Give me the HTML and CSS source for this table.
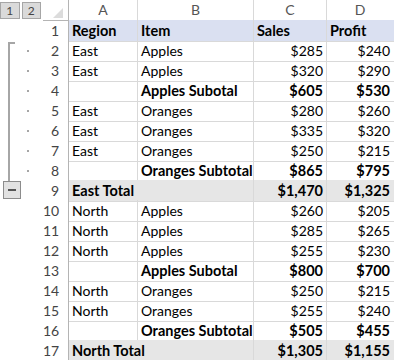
FILE: index.html
```html
<!DOCTYPE html>
<html>

<head>
    <title>Subtotals by Region</title>
    <link rel="stylesheet" href="styles.css">
</head>

<body>
    <div class="sheet">
        <div class="row col_head">
            <div class="gutter levels">
                <span class="lvl_btn">1</span><span class="lvl_btn">2</span>
            </div>
            <div class="rownum corner">
                <svg width="10" height="10" viewBox="0 0 10 10"><polygon points="10,0 10,10 0,10" fill="#dcdcdc" /></svg>
            </div>
            <div class="cell letter">A</div>
            <div class="cell letter">B</div>
            <div class="cell letter">C</div>
            <div class="cell letter">D</div>
        </div>

        <div class="row title">
            <div class="gutter"></div>
            <div class="rownum">1</div>
            <div class="cell">Region</div>
            <div class="cell">Item</div>
            <div class="cell">Sales</div>
            <div class="cell">Profit</div>
        </div>

        <div class="row">
            <div class="gutter grp first"><span class="dot"></span></div>
            <div class="rownum">2</div>
            <div class="cell">East</div>
            <div class="cell">Apples</div>
            <div class="cell num">$285</div>
            <div class="cell num">$240</div>
        </div>
        <div class="row">
            <div class="gutter grp"><span class="dot"></span></div>
            <div class="rownum">3</div>
            <div class="cell">East</div>
            <div class="cell">Apples</div>
            <div class="cell num">$320</div>
            <div class="cell num">$290</div>
        </div>
        <div class="row sub">
            <div class="gutter grp"><span class="dot"></span></div>
            <div class="rownum">4</div>
            <div class="cell"></div>
            <div class="cell">Apples Subotal</div>
            <div class="cell num">$605</div>
            <div class="cell num">$530</div>
        </div>
        <div class="row">
            <div class="gutter grp"><span class="dot"></span></div>
            <div class="rownum">5</div>
            <div class="cell">East</div>
            <div class="cell">Oranges</div>
            <div class="cell num">$280</div>
            <div class="cell num">$260</div>
        </div>
        <div class="row">
            <div class="gutter grp"><span class="dot"></span></div>
            <div class="rownum">6</div>
            <div class="cell">East</div>
            <div class="cell">Oranges</div>
            <div class="cell num">$335</div>
            <div class="cell num">$320</div>
        </div>
        <div class="row">
            <div class="gutter grp"><span class="dot"></span></div>
            <div class="rownum">7</div>
            <div class="cell">East</div>
            <div class="cell">Oranges</div>
            <div class="cell num">$250</div>
            <div class="cell num">$215</div>
        </div>
        <div class="row sub">
            <div class="gutter grp"><span class="dot"></span></div>
            <div class="rownum">8</div>
            <div class="cell"></div>
            <div class="cell">Oranges Subtotal</div>
            <div class="cell num">$865</div>
            <div class="cell num">$795</div>
        </div>
        <div class="row total">
            <div class="gutter"><span class="collapse"></span></div>
            <div class="rownum">9</div>
            <div class="cell wide">East Total</div>
            <div class="cell num">$1,470</div>
            <div class="cell num">$1,325</div>
        </div>

        <div class="row">
            <div class="gutter"></div>
            <div class="rownum">10</div>
            <div class="cell">North</div>
            <div class="cell">Apples</div>
            <div class="cell num">$260</div>
            <div class="cell num">$205</div>
        </div>
        <div class="row">
            <div class="gutter"></div>
            <div class="rownum">11</div>
            <div class="cell">North</div>
            <div class="cell">Apples</div>
            <div class="cell num">$285</div>
            <div class="cell num">$265</div>
        </div>
        <div class="row">
            <div class="gutter"></div>
            <div class="rownum">12</div>
            <div class="cell">North</div>
            <div class="cell">Apples</div>
            <div class="cell num">$255</div>
            <div class="cell num">$230</div>
        </div>
        <div class="row sub">
            <div class="gutter"></div>
            <div class="rownum">13</div>
            <div class="cell"></div>
            <div class="cell">Apples Subotal</div>
            <div class="cell num">$800</div>
            <div class="cell num">$700</div>
        </div>
        <div class="row">
            <div class="gutter"></div>
            <div class="rownum">14</div>
            <div class="cell">North</div>
            <div class="cell">Oranges</div>
            <div class="cell num">$250</div>
            <div class="cell num">$215</div>
        </div>
        <div class="row">
            <div class="gutter"></div>
            <div class="rownum">15</div>
            <div class="cell">North</div>
            <div class="cell">Oranges</div>
            <div class="cell num">$255</div>
            <div class="cell num">$240</div>
        </div>
        <div class="row sub">
            <div class="gutter"></div>
            <div class="rownum">16</div>
            <div class="cell"></div>
            <div class="cell">Oranges Subtotal</div>
            <div class="cell num">$505</div>
            <div class="cell num">$455</div>
        </div>
        <div class="row total">
            <div class="gutter"></div>
            <div class="rownum">17</div>
            <div class="cell wide">North Total</div>
            <div class="cell num">$1,305</div>
            <div class="cell num">$1,155</div>
        </div>
    </div>
</body>

</html>
```

FILE: styles.css
```css
body {
    margin: 0;
    background-color: #ffffff;
    color: #000000;
    font-family: 'Lato', 'Liberation Sans', sans-serif;
    font-size: 14px;
}

.sheet {
    width: 394px;
    overflow: hidden;
}

.row {
    display: grid;
    grid-template-columns: 43px 26px 69px 116px 73px 67px;
    height: 20px;
}

.gutter {
    position: relative;
}

.rownum {
    color: #444444;
    text-align: right;
    padding-right: 9px;
    line-height: 21px;
    border-right: 1px solid #b4b4b4;
}

.cell {
    padding: 0 3px;
    line-height: 21px;
    white-space: nowrap;
    border-bottom: 1px solid #d9d9d9;
    border-right: 1px solid #d9d9d9;
    box-sizing: border-box;
}

.cell:last-child {
    border-right: none;
    padding-right: 4px;
}

.num {
    text-align: right;
}

/* text that spills into the next empty column */
.wide {
    grid-column: span 2;
}

/* column letters */
.col_head .cell {
    border-bottom: 1px solid #b4b4b4;
}

.corner {
    display: flex;
    justify-content: flex-end;
    align-items: flex-end;
    box-sizing: border-box;
    padding: 0 5px 2px 0;
    border-bottom: 1px solid #b4b4b4;
}

.corner svg {
    display: block;
}

.letter {
    text-align: center;
    color: #555555;
    line-height: 20px;
}

.levels {
    display: flex;
    padding-top: 2px;
}

.lvl_btn {
    width: 18px;
    height: 15px;
    margin-right: 2px;
    background-color: #dadada;
    border: 1px solid #a6a6a6;
    color: #444444;
    font-size: 12px;
    line-height: 15px;
    text-align: center;
}

.title .cell {
    background-color: #dae0f1;
    font-weight: 700;
}

.sub .cell,
.total .cell {
    font-weight: 700;
    font-size: 14.5px;
}

.title .cell {
    font-size: 14.5px;
}

.total .cell {
    background-color: #e6e6e6;
}

/* outline bracket */
.grp::before {
    content: "";
    position: absolute;
    left: 8px;
    top: 0;
    bottom: 0;
    border-left: 2px solid #a6a6a6;
}

.grp.first::before {
    top: 2px;
    width: 5px;
    border-top: 2px solid #a6a6a6;
}

.dot {
    position: absolute;
    left: 27px;
    top: 10px;
    width: 2px;
    height: 2px;
    background-color: #a6a6a6;
}

.collapse {
    position: absolute;
    left: 3px;
    top: 1px;
    width: 16px;
    height: 16px;
    background-color: #e2e2e2;
    border: 1px solid #8c8c8c;
}

.collapse::after {
    content: "";
    position: absolute;
    left: 4px;
    top: 7px;
    width: 8px;
    height: 2px;
    background-color: #555555;
}
```
